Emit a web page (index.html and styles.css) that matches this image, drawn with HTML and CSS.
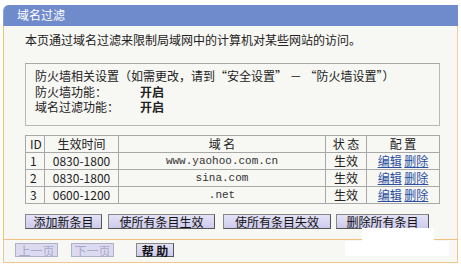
FILE: index.html
```html
<!DOCTYPE html>
<html lang="zh-CN">
<head>
    <meta charset="UTF-8">
    <title>域名过滤</title>
    <link rel="stylesheet" href="styles.css">
</head>
<body>
    <div class="panel">
        <div class="title">域名过滤</div>

        <div class="content">
            <p class="intro">本页通过域名过滤来限制局域网中的计算机对某些网站的访问。</p>

            <div class="box">
                <div class="line">防火墙相关设置（如需更改，请到“安全设置” － “防火墙设置”）</div>
                <div class="line"><span class="key">防火墙功能：</span><b>开启</b></div>
                <div class="line"><span class="key">域名过滤功能：</span><b>开启</b></div>
            </div>

            <table class="rules">
                <thead>
                    <tr>
                        <th class="c-id">ID</th>
                        <th class="c-time">生效时间</th>
                        <th class="c-domain">域 名</th>
                        <th class="c-state">状 态</th>
                        <th class="c-conf">配 置</th>
                    </tr>
                </thead>
                <tbody>
                    <tr>
                        <td>1</td>
                        <td>0830-1800</td>
                        <td class="mono">www.yaohoo.com.cn</td>
                        <td>生效</td>
                        <td><a href="#">编辑</a> <a href="#">删除</a></td>
                    </tr>
                    <tr>
                        <td>2</td>
                        <td>0830-1800</td>
                        <td class="mono">sina.com</td>
                        <td>生效</td>
                        <td><a href="#">编辑</a> <a href="#">删除</a></td>
                    </tr>
                    <tr>
                        <td>3</td>
                        <td>0600-1200</td>
                        <td class="mono">.net</td>
                        <td>生效</td>
                        <td><a href="#">编辑</a> <a href="#">删除</a></td>
                    </tr>
                </tbody>
            </table>

            <div class="actions">
                <button class="btn w-add">添加新条目</button>
                <button class="btn w-on">使所有条目生效</button>
                <button class="btn w-off">使所有条目失效</button>
                <button class="btn w-del">删除所有条目</button>
            </div>
        </div>

        <div class="footer">
            <button class="btn small" disabled>上一页</button>
            <button class="btn small" disabled>下一页</button>
            <button class="btn help">帮 助</button>
        </div>

        <div class="blot"></div>
    </div>
</body>
</html>
```

FILE: styles.css
```css
body {
    margin: 0;
    background: #fff;
    font-family: "Noto Sans CJK SC", "DejaVu Sans", sans-serif;
    font-size: 12px;
    color: #222;
}

.panel {
    position: relative;
    margin: 5px 3px 0 3px;
    width: 455px;
}

.title {
    height: 21px;
    line-height: 20px;
    padding-left: 13px;
    background: #6f8bcb;
    color: #fff;
    border-top-left-radius: 6px;
    border-left: 1px solid #8aa0d8;
}

.content {
    background: #f7f7f4;
    border-left: 1px solid #f0c36c;
    border-right: 1px solid #f6c9a0;
    padding: 6px 0 10px 21px;
}

.intro {
    margin: 0 0 15px 0;
    line-height: 16px;
}

.box {
    width: 404px;
    height: 52px;
    border: 1px solid #b8b8b8;
    border-top-color: #a8a8a8;
    padding: 4px 0 5px 9px;
    margin-bottom: 9px;
}

.line {
    height: 15.5px;
    line-height: 15px;
}

.key {
    display: inline-block;
    width: 105px;
}

.line b {
    font-weight: bold;
}

.rules {
    width: 415px;
    border-collapse: separate;
    border-spacing: 0;
    border: 1px solid #a8a8a8;
    border-right: 0;
    border-bottom: 0;
    margin-bottom: 10px;
}

.rules th,
.rules td {
    height: 16px;
    padding: 0;
    border-right: 1px solid #a8a8a8;
    border-bottom: 1px solid #a8a8a8;
    text-align: center;
    font-weight: normal;
    line-height: 16px;
    white-space: nowrap;
}

.rules td:first-child,
.rules th:first-child {
    text-align: left;
    padding-left: 4px;
}

.c-id { width: 14px; }
.c-time { width: 73px; }
.c-domain { width: 206px; }
.c-state { width: 40px; }

.mono {
    font-family: "Liberation Mono", monospace;
    font-size: 11px;
    color: #333;
}

.rules a {
    color: #2a4ea0;
    text-decoration: underline;
}

.actions {
    display: flex;
    gap: 5px;
    height: 15px;
}

.btn {
    height: 15px;
    padding: 0;
    font-family: inherit;
    font-size: 12px;
    line-height: 13px;
    color: #111;
    background: linear-gradient(#e4e2f6, #cdcbec);
    border: 1px solid #555;
    border-top-color: #888;
    border-left-color: #888;
}

.w-add { width: 77px; }
.w-on { width: 107px; margin-left: 1px; }
.w-off { width: 108px; margin-left: 3px; }
.w-del { width: 93px; }

.footer {
    background: #f7f7f4;
    border: 1px solid #f2c58a;
    border-top-color: #f0c080;
    height: 19px;
    padding: 3px 0 0 11px;
    display: flex;
    gap: 13px;
}

.footer .small {
    width: 43px;
    height: 14px;
    color: #a8a8c8;
    background: #dcdaf0;
    border-color: #b0b0c8;
}

.footer .help {
    width: 38px;
    height: 14px;
    margin-left: 9px;
    font-weight: bold;
}

.blot {
    position: absolute;
    left: 359px;
    top: 223px;
    width: 72px;
    height: 14px;
    background: #fff;
}

.blot::after {
    content: "";
    position: absolute;
    left: -17px;
    top: 13px;
    width: 104px;
    height: 15px;
    background: #fff;
}
```
